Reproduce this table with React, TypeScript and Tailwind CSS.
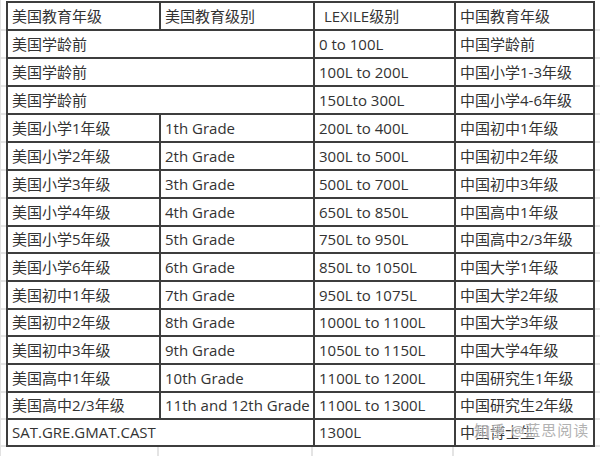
import React from "react";

const heights = [
  "h-[28px]", "h-[28px]", "h-[28px]", "h-[28px]", "h-[28px]", "h-[28px]", "h-[28px]", "h-[28px]",
  "h-[27px]", "h-[28px]", "h-[28px]", "h-[27px]", "h-[28px]", "h-[28px]", "h-[27px]", "h-[27px]",
];

const data: (string | null)[][] = [
  ["美国教育年级", "美国教育级别", " LEXILE级别", "中国教育年级"],
  ["美国学龄前", null, "0 to 100L", "中国学龄前"],
  ["美国学龄前", null, "100L to 200L", "中国小学1-3年级"],
  ["美国学龄前", null, "150Lto 300L", "中国小学4-6年级"],
  ["美国小学1年级", "1th Grade", "200L to 400L", "中国初中1年级"],
  ["美国小学2年级", "2th Grade", "300L to 500L", "中国初中2年级"],
  ["美国小学3年级", "3th Grade", "500L to 700L", "中国初中3年级"],
  ["美国小学4年级", "4th Grade", "650L to 850L", "中国高中1年级"],
  ["美国小学5年级", "5th Grade", "750L to 950L", "中国高中2/3年级"],
  ["美国小学6年级", "6th Grade", "850L to 1050L", "中国大学1年级"],
  ["美国初中1年级", "7th Grade", "950L to 1075L", "中国大学2年级"],
  ["美国初中2年级", "8th Grade", "1000L to 1100L", "中国大学3年级"],
  ["美国初中3年级", "9th Grade", "1050L to 1150L", "中国大学4年级"],
  ["美国高中1年级", "10th Grade", "1100L to 1200L", "中国研究生1年级"],
  ["美国高中2/3年级", "11th and 12th Grade", "1100L to 1300L", "中国研究生2年级"],
  ["SAT.GRE.GMAT.CAST", null, "1300L", "中国博士生"],
];

const line = "border-[#3d3d3d]";

export default function App() {
  return (
    <div
      className="w-[600px] h-[456px] bg-white overflow-hidden text-[15px] text-[#333333] flex"
      style={{ fontFamily: '"Open Sans", "Noto Sans CJK SC", sans-serif' }}
    >
      {/* left gutter */}
      <div className="w-[6px] flex flex-col pt-[3px] border-l border-[#e2e2e2]">
        {heights.map((h, i) => (
          <div key={i} className={`${h} border-b-2 border-[#e4e4e4]`} />
        ))}
      </div>
      <div className="flex flex-col pt-[1px]">
        <div className={`relative grid grid-cols-[153px_154px_141px_139px] border-t-2 border-l-2 ${line}`}>
          {data.map((row, ri) => {
            const h = heights[ri];
            const out: React.ReactNode[] = [];
            row.forEach((c, ci) => {
              if (c === null) return;
              const span = row[ci + 1] === null && ci === 0;
              const isLex = ri === 0 && ci === 2;
              out.push(
                <div
                  key={`${ri}-${ci}`}
                  className={`${h} border-r-2 border-b-2 ${line} flex items-center whitespace-nowrap overflow-hidden ${
                    span ? "col-span-2" : ""
                  } ${isLex ? "pl-[9px]" : "pl-[4px]"}`}
                >
                  {c.trim()}
                </div>
              );
            });
            return out;
          })}
          <div
            className="absolute left-[466px] bottom-[6px] text-[15px] text-[#a0a0a0] whitespace-nowrap tracking-[1px] opacity-80"
            style={{ textShadow: "0 0 2px #fff, 1px 1px 0 #fff, -1px -1px 0 #fff" }}
          >
            知乎 @蓝思阅读
          </div>
        </div>
        <div className="flex">
          <div className="w-[153px] h-[10px] border-r-2 border-[#e4e4e4]" />
          <div className="w-[154px] h-[10px] border-r-2 border-[#e4e4e4]" />
          <div className="w-[141px] h-[10px] border-r-2 border-[#e4e4e4]" />
        </div>
      </div>
      {/* right gutter */}
      <div className="flex-1 flex flex-col pt-[3px]">
        {heights.map((h, i) => (
          <div key={i} className={`${h} border-b-2 border-[#e4e4e4]`} />
        ))}
      </div>
    </div>
  );
}
